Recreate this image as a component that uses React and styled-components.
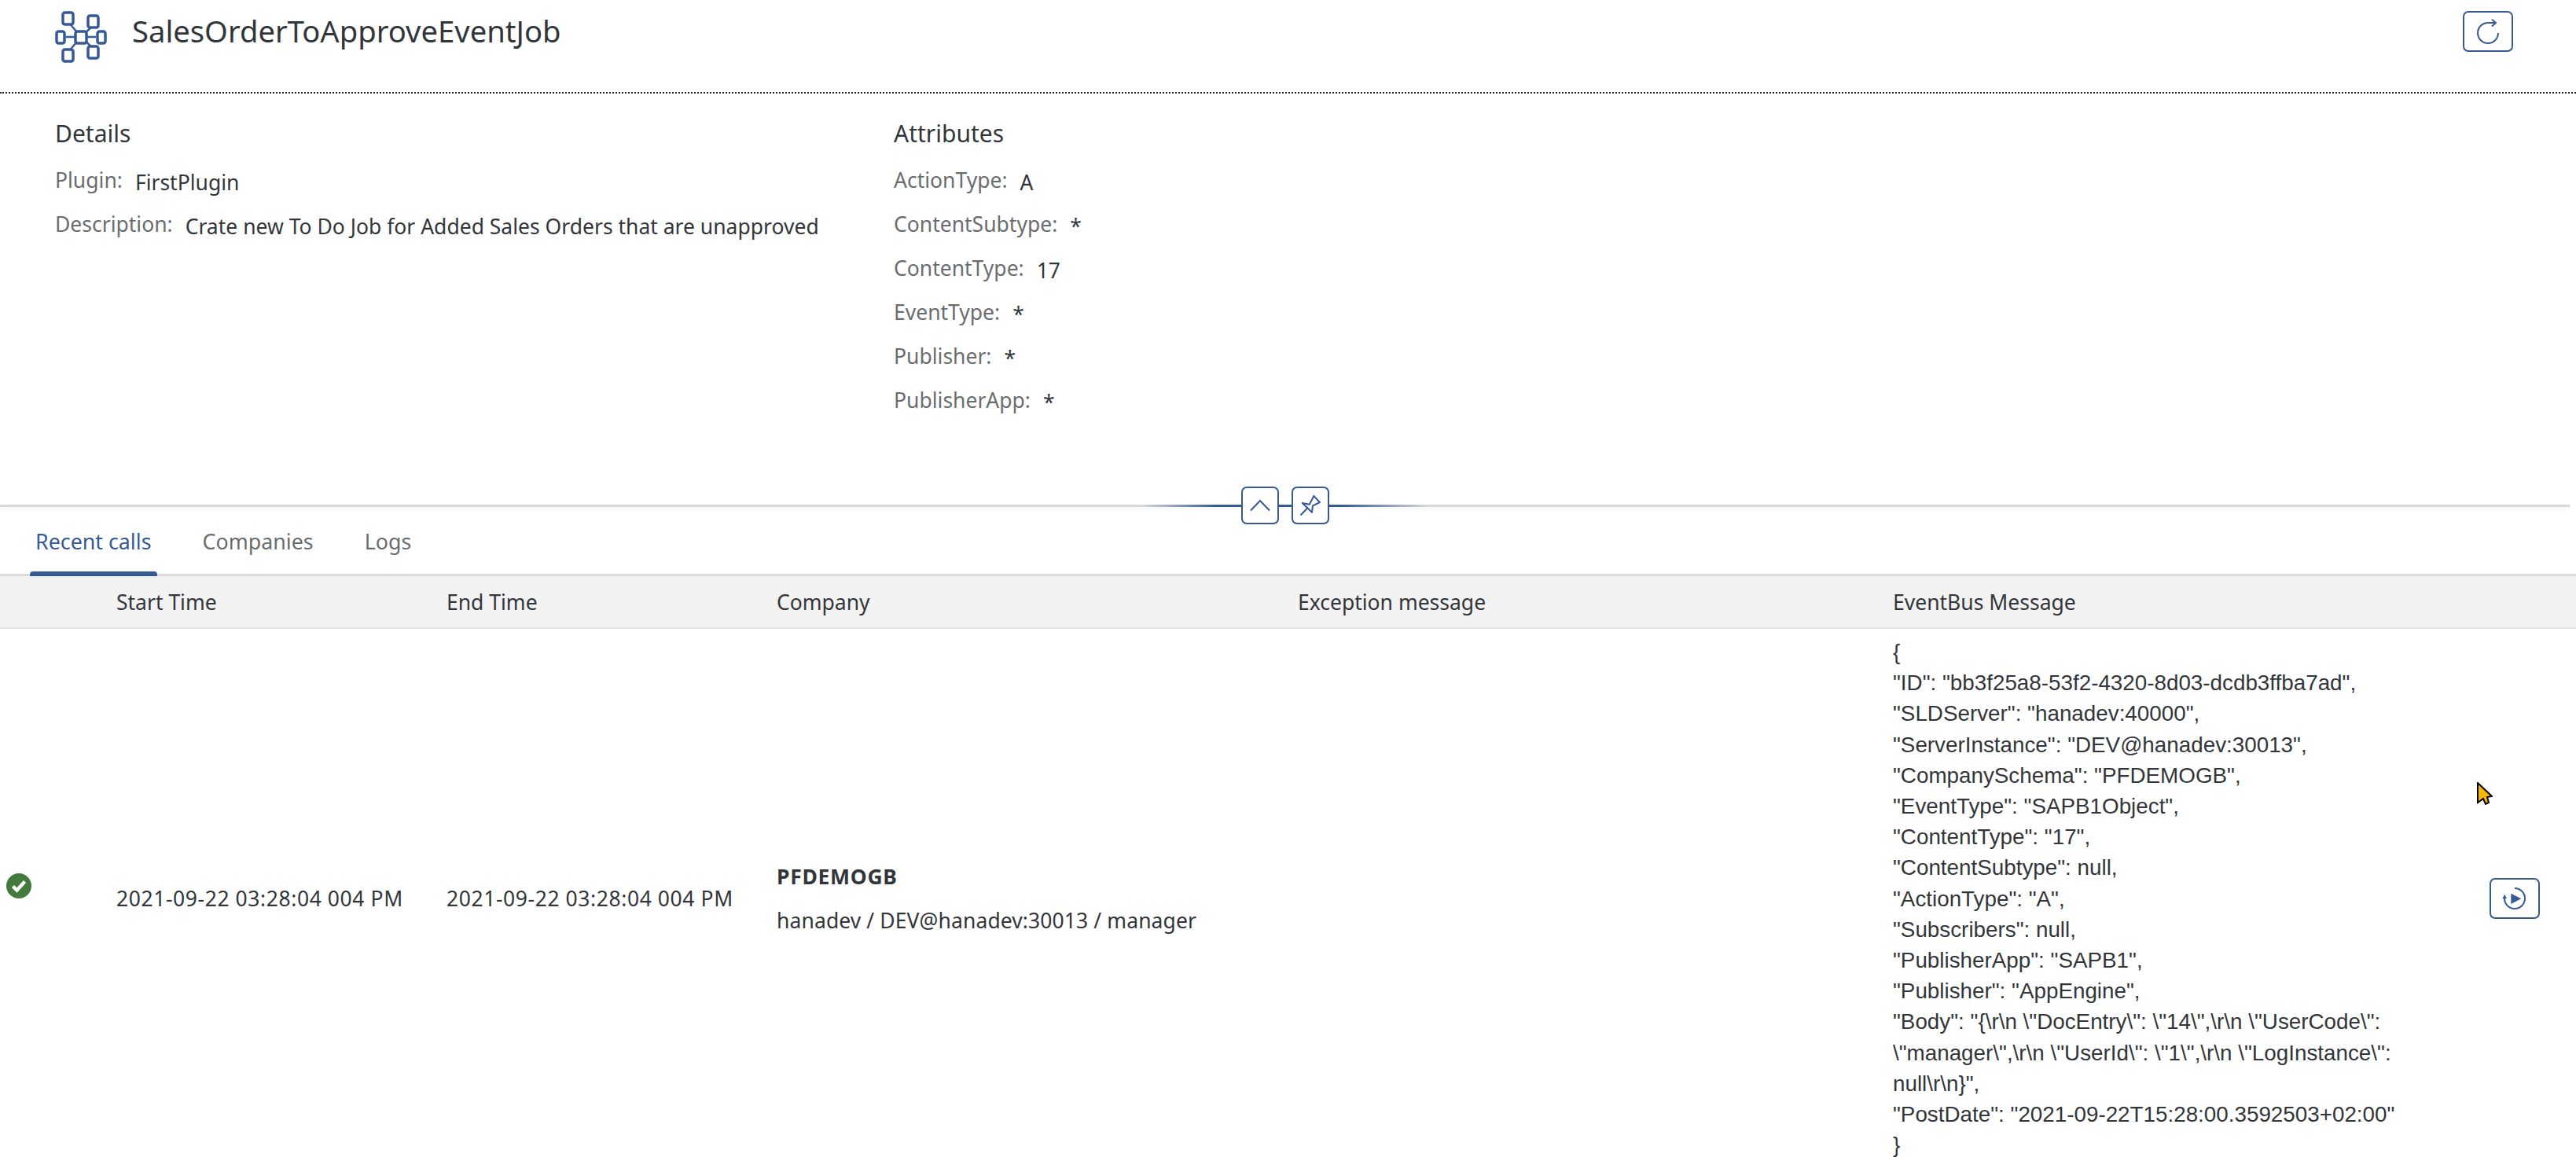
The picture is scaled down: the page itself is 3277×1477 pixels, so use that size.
import React from "react";
import styled, { createGlobalStyle } from "styled-components";

const blue = "#365a96";

const GlobalStyle = createGlobalStyle`
  html, body {
    margin: 0;
    padding: 0;
    background: #fff;
    color: #32363a;
    font-family: "Noto Sans", "Open Sans", sans-serif;
  }
`;

const Page = styled.div`
  position: relative;
  width: 3277px;
  height: 1477px;
  overflow: hidden;
  background: #fff;
`;

const Header = styled.header`
  display: flex;
  align-items: flex-start;
  box-sizing: border-box;
  height: 119px;
  padding: 14px 80px 0 70px;
  border-bottom: 2px dotted #222;
`;

const Title = styled.h1`
  flex: 1;
  margin: -1px 0 0 32px;
  font-size: 38.2px;
  line-height: 52px;
  font-weight: 400;
  color: #32363a;
`;

const IconButton = styled.button`
  display: flex;
  align-items: center;
  justify-content: center;
  box-sizing: border-box;
  flex: none;
  width: ${(props) => props.$w || 48}px;
  height: ${(props) => props.$h || 48}px;
  padding: 0;
  background: #fff;
  border: 2px solid ${blue};
  border-radius: 7px;
`;

const Summary = styled.section`
  display: flex;
  height: 500px;
  padding-left: 70px;
`;

const SummaryColumn = styled.div`
  width: ${(props) => props.$w}px;
  padding-top: 29px;
`;

const SummaryTitle = styled.h2`
  margin: 0 0 9px;
  font-size: 30px;
  line-height: 44px;
  font-weight: 400;
  color: #32363a;
`;

const Field = styled.div`
  display: flex;
  height: 56px;
  align-items: center;
  font-size: 26.5px;
`;

const FieldLabel = styled.span`
  color: #6a6d70;
  margin-right: 16px;
`;

const FieldValue = styled.span`
  position: relative;
  top: 3px;
  color: #32363a;
`;

const DividerBar = styled.div`
  display: flex;
  align-items: center;
  height: 48px;
  padding-right: 8px;
`;

const DividerLine = styled.div`
  height: 3px;
  flex: ${(props) => (props.$fixed ? "0 0 16px" : "1")};
  background: ${(props) => props.$bg};
  box-shadow: 0 3px 5px rgba(0, 0, 0, 0.06);
`;

const TabBar = styled.div`
  display: flex;
  height: 66px;
  padding-left: 38px;
  gap: 51px;
  border-bottom: 3px solid #d9d9d9;
  box-sizing: border-box;
`;

const Tab = styled.div`
  position: relative;
  padding: 0 7px;
  font-size: 26.8px;
  line-height: 44px;
  color: ${(props) => (props.$active ? blue : "#6a6d70")};
  ${(props) =>
    props.$active &&
    `&::after {
      content: "";
      position: absolute;
      left: 0;
      right: 0;
      bottom: -3px;
      height: 6px;
      background: ${blue};
      border-radius: 4px 4px 0 0;
    }`}
`;

const columns = "148px 420px 420px 663px 757px 1fr 110px";

const TableHead = styled.div`
  display: grid;
  grid-template-columns: ${columns};
  align-items: center;
  height: 67px;
  box-sizing: border-box;
  background: #f2f2f2;
  border-bottom: 2px solid #e4e4e4;
  font-size: 26.5px;
  color: #32363a;
`;

const TableRow = styled.div`
  display: grid;
  grid-template-columns: ${columns};
  align-items: center;
  font-size: 26.5px;
  color: #32363a;
  padding: 10px 0;
`;

const StatusCell = styled.div`
  padding: 0 0 32px 8px;
  display: flex;
`;

const DateCell = styled.div`
  letter-spacing: 0.58px;
`;

const CompanyName = styled.div`
  font-weight: 700;
  line-height: 40px;
  margin-bottom: 16px;
  letter-spacing: 0.7px;
`;

const CompanyInfo = styled.div`
  line-height: 40px;
  letter-spacing: 0.1px;
`;

const Message = styled.div`
  width: 670px;
  font-family: "Liberation Sans", Arial, sans-serif;
  font-size: 27.8px;
  line-height: 39.2px;
`;

const ActionCell = styled.div`
  display: flex;
  justify-content: flex-end;
  padding-right: 46px;
`;

const Cursor = styled.svg`
  position: absolute;
  left: 3151px;
  top: 995px;
`;

const NetworkIcon = () => (
  <svg width="66" height="66" viewBox="0 0 66 66" fill="none" stroke={blue} strokeWidth="3.5">
    <path d="M17 14 L33 33 L49 18 M17 52 L33 33 L49 48 M14 33 H52" strokeWidth="2.5" />
    <rect x="10" y="2" width="13" height="15" rx="2.5" fill="#fff" />
    <rect x="42" y="6" width="13" height="15" rx="2.5" fill="#fff" />
    <rect x="2" y="26" width="10" height="15" rx="2.5" fill="#fff" />
    <rect x="26" y="26" width="14" height="15" rx="2.5" fill="#fff" />
    <rect x="54" y="26" width="10" height="15" rx="2.5" fill="#fff" />
    <rect x="10" y="49" width="13" height="15" rx="2.5" fill="#fff" />
    <rect x="42" y="45" width="13" height="15" rx="2.5" fill="#fff" />
  </svg>
);

const RefreshIcon = () => (
  <svg width="32" height="32" viewBox="0 0 32 32" fill="none" stroke={blue} strokeWidth="2">
    <path d="M29 18 A13 13 0 1 1 16 5 H26" />
    <path d="M21 0.8 L26 5 L21 9.5" />
  </svg>
);

const ChevronUpIcon = () => (
  <svg width="28" height="18" viewBox="0 0 28 18" fill="none" stroke={blue} strokeWidth="2">
    <path d="M2 15.5 L14 3 L26 15.5" />
  </svg>
);

const PinIcon = () => (
  <svg width="26" height="26" viewBox="0 0 26 26" fill="none" stroke={blue} strokeWidth="2" strokeLinejoin="round">
    <path d="M0.5 25.5 L10 15.5" />
    <path d="M17.3 1 L25 9 L16 13.3 L15 21.7 L2.7 10 L11.7 11.7 Z" />
  </svg>
);

const ReplayIcon = () => (
  <svg width="32" height="32" viewBox="0 0 32 32">
    <path d="M3 16 A13 13 0 1 0 16 3" fill="none" stroke={blue} strokeWidth="2" />
    <path d="M0.3 16.3 L3.3 10.7 L6 16.3 Z" fill={blue} />
    <path d="M11.3 9.7 L24.3 16.3 L11.3 23 Z" fill={blue} />
  </svg>
);

const CheckIcon = () => (
  <svg width="32" height="32" viewBox="0 0 32 32">
    <circle cx="16" cy="16" r="16" fill="#417a3c" />
    <path d="M8.5 16.5 L13.5 21.5 L23.5 10.5" fill="none" stroke="#fff" strokeWidth="4.4" />
  </svg>
);

const details = [
  ["Plugin:", "FirstPlugin"],
  ["Description:", "Crate new To Do Job for Added Sales Orders that are unapproved"],
];

const attributes = [
  ["ActionType:", "A"],
  ["ContentSubtype:", "*"],
  ["ContentType:", "17"],
  ["EventType:", "*"],
  ["Publisher:", "*"],
  ["PublisherApp:", "*"],
];

const messageLines = [
  "{",
  '"ID": "bb3f25a8-53f2-4320-8d03-dcdb3ffba7ad",',
  '"SLDServer": "hanadev:40000",',
  '"ServerInstance": "DEV@hanadev:30013",',
  '"CompanySchema": "PFDEMOGB",',
  '"EventType": "SAPB1Object",',
  '"ContentType": "17",',
  '"ContentSubtype": null,',
  '"ActionType": "A",',
  '"Subscribers": null,',
  '"PublisherApp": "SAPB1",',
  '"Publisher": "AppEngine",',
  '"Body": "{\\r\\n \\"DocEntry\\": \\"14\\",\\r\\n \\"UserCode\\": \\"manager\\",\\r\\n \\"UserId\\": \\"1\\",\\r\\n \\"LogInstance\\": null\\r\\n}",',
  '"PostDate": "2021-09-22T15:28:00.3592503+02:00"',
  "}",
];

const App = () => (
  <Page>
    <GlobalStyle />
    <Header>
      <NetworkIcon />
      <Title>SalesOrderToApproveEventJob</Title>
      <IconButton $w={64} $h={52}>
        <RefreshIcon />
      </IconButton>
    </Header>
    <Summary>
      <SummaryColumn $w={1067}>
        <SummaryTitle>Details</SummaryTitle>
        {details.map(([label, value]) => (
          <Field key={label}>
            <FieldLabel>{label}</FieldLabel>
            <FieldValue>{value}</FieldValue>
          </Field>
        ))}
      </SummaryColumn>
      <SummaryColumn $w={1000}>
        <SummaryTitle>Attributes</SummaryTitle>
        {attributes.map(([label, value]) => (
          <Field key={label}>
            <FieldLabel>{label}</FieldLabel>
            <FieldValue>{value}</FieldValue>
          </Field>
        ))}
      </SummaryColumn>
    </Summary>
    <DividerBar>
      <DividerLine $bg={`linear-gradient(90deg, #d9d9d9 92%, ${blue} 98%)`} />
      <IconButton>
        <ChevronUpIcon />
      </IconButton>
      <DividerLine $fixed $bg={blue} />
      <IconButton>
        <PinIcon />
      </IconButton>
      <DividerLine $bg={`linear-gradient(90deg, ${blue} 1%, #d9d9d9 8%)`} />
    </DividerBar>
    <TabBar>
      <Tab $active>Recent calls</Tab>
      <Tab>Companies</Tab>
      <Tab>Logs</Tab>
    </TabBar>
    <TableHead>
      <span />
      <span>Start Time</span>
      <span>End Time</span>
      <span>Company</span>
      <span>Exception message</span>
      <span>EventBus Message</span>
      <span />
    </TableHead>
    <TableRow>
      <StatusCell>
        <CheckIcon />
      </StatusCell>
      <DateCell>2021-09-22 03:28:04 004 PM</DateCell>
      <DateCell>2021-09-22 03:28:04 004 PM</DateCell>
      <div>
        <CompanyName>PFDEMOGB</CompanyName>
        <CompanyInfo>hanadev / DEV@hanadev:30013 / manager</CompanyInfo>
      </div>
      <div />
      <Message>
        {messageLines.map((line) => (
          <div key={line}>{line}</div>
        ))}
      </Message>
      <ActionCell>
        <IconButton $w={64} $h={52}>
          <ReplayIcon />
        </IconButton>
      </ActionCell>
    </TableRow>
    <Cursor width="20" height="30" viewBox="0 0 20 30">
      <path d="M1 1 V26 L8 21 L11 28 L15 26 L13 19 L19 18 Z" fill="#f5b800" stroke="#000" strokeWidth="2" />
    </Cursor>
  </Page>
);

export default App;
